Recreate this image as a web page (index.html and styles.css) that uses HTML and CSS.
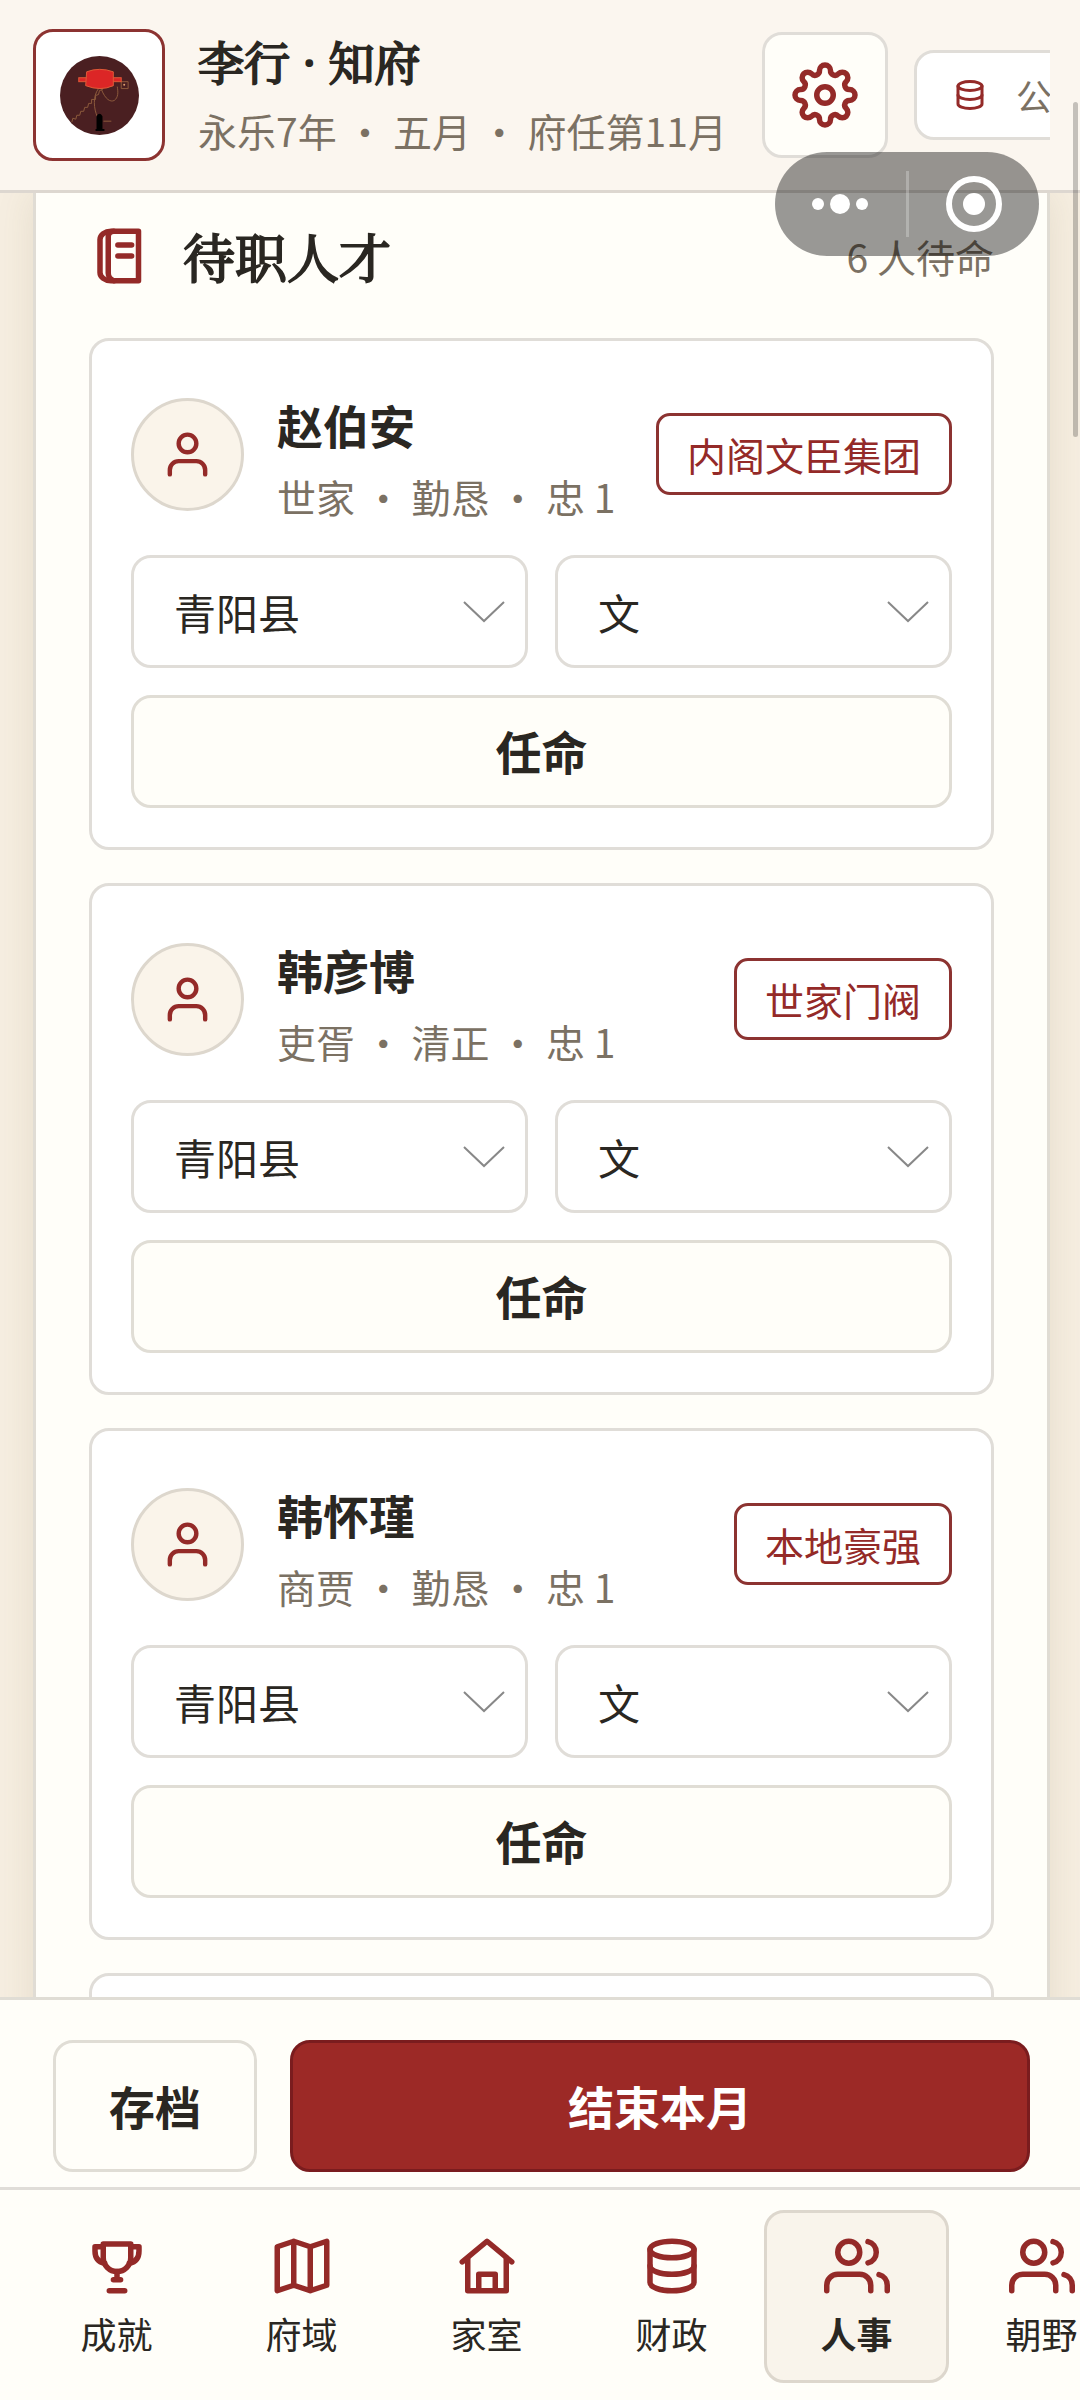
FILE: index.html
```
<!DOCTYPE html>
<html lang="zh-CN">

<head>
    <meta charset="UTF-8">
    <meta name="viewport" content="width=device-width, initial-scale=1.0">
    <title>人事</title>
    <link rel="stylesheet" href="styles.css">
</head>

<body>
    <!--shared icons, used below with <use>-->
    <svg class="sprite" aria-hidden="true">
        <symbol id="icon-user" viewBox="0 0 24 24">
            <path d="M20 21v-2a4 4 0 0 0-4-4H8a4 4 0 0 0-4 4v2" />
            <circle cx="12" cy="7" r="4" />
        </symbol>
        <symbol id="icon-users" viewBox="0 0 24 24">
            <path d="M17 21v-2a4 4 0 0 0-4-4H5a4 4 0 0 0-4 4v2" />
            <circle cx="9" cy="7" r="4" />
            <path d="M23 21v-2a4 4 0 0 0-3-3.87" />
            <path d="M16 3.13a4 4 0 0 1 0 7.75" />
        </symbol>
        <symbol id="icon-coins" viewBox="0 0 24 24">
            <ellipse cx="12" cy="6" rx="8" ry="3" />
            <path d="M4 6v6a8 3 0 0 0 16 0V6" />
            <path d="M4 12v6a8 3 0 0 0 16 0v-6" />
        </symbol>
        <symbol id="icon-down" viewBox="0 0 42 22">
            <path d="M1 1l20 19L41 1" />
        </symbol>
    </svg>

    <header class="topbar">
        <div class="avatar">
            <svg viewBox="0 0 80 80">
                <circle cx="40" cy="40" r="40" fill="#4a1f21" />
                <g fill="none" stroke="#8c5a3c" stroke-width="1">
                    <path d="M12 67l1-4 3 1 1-4 3 0 1-4 3 0 1-4 3 0 1-4 3 0 0-4 4 0 0-4 3-1 1-4 3-1 0-4" />
                    <path d="M39 33c-6 8-5 20-1 29M42 34c4 10 9 13 13 11 4-3 4-8 3-14M44 66h8" />
                    <path d="M40 33l14-3M62 26h7v7h-7z" />
                </g>
                <circle cx="65" cy="29" r="1" fill="#e0a070" />
                <g fill="#dc2626" stroke="#e05a38" stroke-width="1">
                    <rect x="19" y="22" width="9" height="4" />
                    <rect x="53" y="22" width="9" height="4" />
                    <path d="M27 16q13-5 27 0v14q-13 6-28 0z" />
                </g>
                <path d="M37 61q3-5 6 0v13h2v2h-9v-2h1z" fill="#000" />
            </svg>
        </div>
        <div class="official">
            <h1 class="official-name">李行 · 知府</h1>
            <p class="muted">永乐7年 • 五月 • 府任第11月</p>
        </div>
        <div class="tools">
            <button class="settings" type="button" aria-label="设置">
                <svg class="icon" viewBox="0 0 24 24">
                    <circle cx="12" cy="12" r="3" />
                    <path d="M20.91 10A2 2 0 1 1 20.91 14A1.66 1.66 0 0 0 19.72 16.89A2 2 0 1 1 16.89 19.72A1.66 1.66 0 0 0 14 20.91A2 2 0 1 1 10 20.91A1.66 1.66 0 0 0 7.11 19.72A2 2 0 1 1 4.28 16.89A1.66 1.66 0 0 0 3.09 14A2 2 0 1 1 3.09 10A1.66 1.66 0 0 0 4.28 7.11A2 2 0 1 1 7.11 4.28A1.66 1.66 0 0 0 10 3.09A2 2 0 1 1 14 3.09A1.66 1.66 0 0 0 16.89 4.28A2 2 0 1 1 19.72 7.11A1.66 1.66 0 0 0 20.91 10z" />
                </svg>
            </button>
            <div class="resource">
                <svg class="icon icon-small"><use href="#icon-coins" /></svg>
                <span>公</span>
            </div>
        </div>
    </header>

    <main class="content">
        <section class="panel">
            <div class="panel-head">
                <svg class="icon" viewBox="0 0 24 24">
                    <path d="M18 3H8a4 3 0 0 0-4 3v12a4 3 0 0 0 4 3h10z" />
                    <path d="M9 3a2 2 0 0 0-2 2v13a3 3 0 0 0 2 3M10.500 8h5M10.500 12h5" />
                </svg>
                <h2 class="panel-title">待职人才</h2>
                <span class="muted">6 人待命</span>
            </div>

            <article class="card">
                <div class="person">
                    <div class="portrait"><svg class="icon icon-mid"><use href="#icon-user" /></svg></div>
                    <div class="person-info">
                        <h3 class="person-name">赵伯安</h3>
                        <p class="muted">世家 • 勤恳 • 忠 1</p>
                    </div>
                    <span class="tag">内阁文臣集团</span>
                </div>
                <div class="fields">
                    <div class="field">
                        <select aria-label="县"><option>青阳县</option></select>
                        <svg class="arrow"><use href="#icon-down" /></svg>
                    </div>
                    <div class="field">
                        <select aria-label="职"><option>文</option></select>
                        <svg class="arrow"><use href="#icon-down" /></svg>
                    </div>
                </div>
                <button class="btn" type="button">任命</button>
            </article>

            <article class="card">
                <div class="person">
                    <div class="portrait"><svg class="icon icon-mid"><use href="#icon-user" /></svg></div>
                    <div class="person-info">
                        <h3 class="person-name">韩彦博</h3>
                        <p class="muted">吏胥 • 清正 • 忠 1</p>
                    </div>
                    <span class="tag">世家门阀</span>
                </div>
                <div class="fields">
                    <div class="field">
                        <select aria-label="县"><option>青阳县</option></select>
                        <svg class="arrow"><use href="#icon-down" /></svg>
                    </div>
                    <div class="field">
                        <select aria-label="职"><option>文</option></select>
                        <svg class="arrow"><use href="#icon-down" /></svg>
                    </div>
                </div>
                <button class="btn" type="button">任命</button>
            </article>

            <article class="card">
                <div class="person">
                    <div class="portrait"><svg class="icon icon-mid"><use href="#icon-user" /></svg></div>
                    <div class="person-info">
                        <h3 class="person-name">韩怀瑾</h3>
                        <p class="muted">商贾 • 勤恳 • 忠 1</p>
                    </div>
                    <span class="tag">本地豪强</span>
                </div>
                <div class="fields">
                    <div class="field">
                        <select aria-label="县"><option>青阳县</option></select>
                        <svg class="arrow"><use href="#icon-down" /></svg>
                    </div>
                    <div class="field">
                        <select aria-label="职"><option>文</option></select>
                        <svg class="arrow"><use href="#icon-down" /></svg>
                    </div>
                </div>
                <button class="btn" type="button">任命</button>
            </article>

            <article class="card"></article>
        </section>
    </main>

    <div class="actions">
        <button class="btn btn-save" type="button">存档</button>
        <button class="btn btn-primary" type="button">结束本月</button>
    </div>

    <nav class="tabs">
        <a class="tab" href="#">
            <svg class="icon" viewBox="0 0 24 24">
                <path d="M7 4h10v5a5 5 0 0 1-10 0z" />
                <path d="M7 5H4v1.500c0 2.500 1.200 4 3.500 4.500M17 5h3v1.500c0 2.500-1.200 4-3.500 4.500" />
                <path d="M12 14v3M10.700 17h2.600M9.200 21h5.600" />
            </svg>
            <span>成就</span>
        </a>
        <a class="tab" href="#">
            <svg class="icon" viewBox="0 0 24 24">
                <path d="M3 5l6-2 6 2 6-2v16l-6 2-6-2-6 2zM9 3v16M15 5v16" />
            </svg>
            <span>府域</span>
        </a>
        <a class="tab" href="#">
            <svg class="icon" viewBox="0 0 24 24">
                <path d="M3 10.500L12 3l9 7.500" />
                <path d="M5 9.500V21h14V9.500M9 21v-6h6v6" />
            </svg>
            <span>家室</span>
        </a>
        <a class="tab" href="#">
            <svg class="icon"><use href="#icon-coins" /></svg>
            <span>财政</span>
        </a>
        <a class="tab active" href="#">
            <svg class="icon"><use href="#icon-users" /></svg>
            <span>人事</span>
        </a>
        <a class="tab" href="#">
            <svg class="icon"><use href="#icon-users" /></svg>
            <span>朝野</span>
        </a>
    </nav>

    <!--floating menu capsule and scroll thumb-->
    <div class="capsule">
        <button class="capsule-btn" type="button" aria-label="更多">
            <svg width="56" height="20" viewBox="0 0 56 20" fill="#fff">
                <circle cx="6" cy="10" r="6" />
                <circle cx="28" cy="10" r="10" />
                <circle cx="50" cy="10" r="6" />
            </svg>
        </button>
        <button class="capsule-btn" type="button" aria-label="关闭">
            <svg width="56" height="56" viewBox="0 0 56 56">
                <circle cx="28" cy="28" r="25" fill="none" stroke="#fff" stroke-width="6" />
                <circle cx="28" cy="28" r="11" fill="#fff" />
            </svg>
        </button>
    </div>
    <div class="thumb"></div>
</body>

</html>
```

FILE: styles.css
```
* {
    box-sizing: border-box;
}

body {
    margin: 0;
    height: 100vh;
    display: flex;
    flex-direction: column;
    overflow: hidden;
    background: #f6eee1;
    color: #2a2722;
    font-family: "Noto Sans CJK SC", sans-serif;
    font-size: 39px;
}

h1,
h2,
h3,
p {
    margin: 0;
}

button,
select {
    font-family: inherit;
    color: inherit;
}

.sprite {
    position: absolute;
    width: 0;
    height: 0;
}

.icon {
    flex: none;
    width: 66px;
    height: 66px;
    fill: none;
    stroke: #942a28;
    stroke-width: 2;
    stroke-linecap: round;
    stroke-linejoin: round;
}

.icon-mid {
    width: 53px;
    height: 53px;
}

.icon-small {
    width: 36px;
    height: 36px;
}

.muted {
    color: #7b7163;
    font-size: 39px;
    line-height: 60px;
    white-space: nowrap;
}

/* top bar */
.topbar {
    flex: none;
    display: flex;
    align-items: center;
    height: 193px;
    padding: 0 30px 0 33px;
    background: #fbf6ef;
    border-bottom: 3px solid #ddd7d0;
}

.avatar {
    flex: none;
    display: flex;
    align-items: center;
    justify-content: center;
    width: 132px;
    height: 132px;
    margin-right: 33px;
    border: 3px solid #8c3331;
    border-radius: 20px;
    background: #fff;
}

.avatar svg {
    width: 79px;
    height: 79px;
}

.official {
    flex: none;
    margin-right: 35px;
}

.official-name {
    margin-bottom: 10px;
    font-family: "Noto Serif CJK SC", "Noto Serif SC", "Noto Sans CJK SC", serif;
    font-size: 46px;
    font-weight: normal;
    line-height: 60px;
    -webkit-text-stroke: 2px #2a2722;
}

.tools {
    flex: 1;
    min-width: 0;
    display: flex;
    align-items: center;
    gap: 26px;
    overflow: hidden;
}

.settings {
    flex: none;
    display: flex;
    align-items: center;
    justify-content: center;
    width: 126px;
    height: 126px;
    padding: 0;
    border: 3px solid #e0ddd8;
    border-radius: 20px;
    background: #fffef9;
}

.resource {
    flex: none;
    display: flex;
    align-items: center;
    gap: 28px;
    width: 240px;
    height: 90px;
    padding-left: 35px;
    border: 3px solid #e0ddd8;
    border-radius: 20px;
    background: #fff;
    color: #7b7163;
    font-size: 36px;
}

/* content */
.content {
    flex: 1;
    min-height: 0;
    padding: 0 30px 0 33px;
    overflow: hidden;
}

.panel {
    padding: 30px 53px;
    border: 3px solid #e0dcd4;
    border-width: 0 3px;
    background: #fffef9;
    box-shadow: 0 0 36px rgba(110, 100, 40, .12);
}

.panel-head {
    display: flex;
    align-items: center;
    height: 66px;
    margin-bottom: 49px;
}

.panel-title {
    flex: 1;
    margin-left: 28px;
    font-family: "Noto Serif CJK SC", "Noto Serif SC", "Noto Sans CJK SC", serif;
    font-size: 52px;
    font-weight: normal;
    line-height: 66px;
    -webkit-text-stroke: 2px #2a2722;
}

.card {
    display: flex;
    flex-direction: column;
    gap: 27px;
    min-height: 200px;
    margin-bottom: 33px;
    padding: 39px;
    border: 3px solid #e0ddd8;
    border-radius: 20px;
    background: #fff;
}

.person {
    display: flex;
    align-items: center;
    height: 148px;
}

.portrait {
    flex: none;
    display: flex;
    align-items: center;
    justify-content: center;
    width: 113px;
    height: 113px;
    border: 3px solid #ddd7cd;
    border-radius: 50%;
    background: #faf4ea;
}

.person-info {
    flex: 1;
    margin-left: 33px;
    padding-top: 12px;
}

.person-name {
    margin-bottom: 12px;
    font-size: 46px;
    line-height: 60px;
}

.tag {
    padding: 0 28px;
    border: 3px solid #8c3331;
    border-radius: 14px;
    color: #942a28;
    line-height: 76px;
}

.fields {
    display: flex;
    gap: 27px;
}

.field {
    flex: 1;
    position: relative;
}

.field select {
    display: block;
    width: 100%;
    height: 113px;
    padding: 0 40px;
    border: 3px solid #e0ddd8;
    border-radius: 20px;
    background: #fff;
    font-size: 42px;
    appearance: none;
}

.arrow {
    position: absolute;
    top: 46px;
    right: 23px;
    width: 42px;
    height: 22px;
    fill: none;
    stroke: #888;
    stroke-width: 2;
    pointer-events: none;
}

.btn {
    height: 113px;
    padding: 0 0 3px;
    border: 3px solid #e0ddd5;
    border-radius: 20px;
    background: #fffef9;
    font-size: 46px;
    font-weight: bold;
}

/* bottom actions */
.actions {
    flex: none;
    display: flex;
    gap: 33px;
    padding: 40px 50px 15px 53px;
    border-top: 3px solid #e0ddd5;
    background: #fffef9;
}

.actions .btn {
    height: 132px;
}

.btn-save {
    width: 204px;
}

.actions .btn-primary {
    flex: 1;
    border-color: #7a1c1e;
    background: #9c2926;
    color: #fff;
}

.tabs {
    flex: none;
    display: flex;
    padding: 20px 24px 17px;
    border-top: 3px solid #e0ddd8;
    background: #fffef9;
    overflow: hidden;
}

.tab {
    flex: none;
    display: flex;
    flex-direction: column;
    align-items: center;
    gap: 8px;
    width: 185px;
    padding: 20px 0;
    border: 3px solid transparent;
    border-radius: 20px;
    color: inherit;
    font-size: 36px;
    line-height: 53px;
    text-decoration: none;
}

.tab.active {
    border-color: #ddd7cd;
    background: #f9f4eb;
    font-weight: bold;
}

/* floating parts */
.capsule {
    position: absolute;
    top: 152px;
    right: 41px;
    display: flex;
    align-items: center;
    width: 264px;
    height: 104px;
    border-radius: 52px;
    background: rgba(0, 0, 0, .4);
}

.capsule-btn {
    flex: 1;
    display: flex;
    align-items: center;
    justify-content: center;
    height: 66px;
    padding: 0;
    border: 0;
    background: none;
}

.capsule-btn + .capsule-btn {
    border-left: 3px solid rgba(255, 255, 255, .25);
}

.thumb {
    position: absolute;
    top: 102px;
    right: 2px;
    width: 5px;
    height: 335px;
    border-radius: 3px;
    background: rgba(0, 0, 0, .22);
}
```
